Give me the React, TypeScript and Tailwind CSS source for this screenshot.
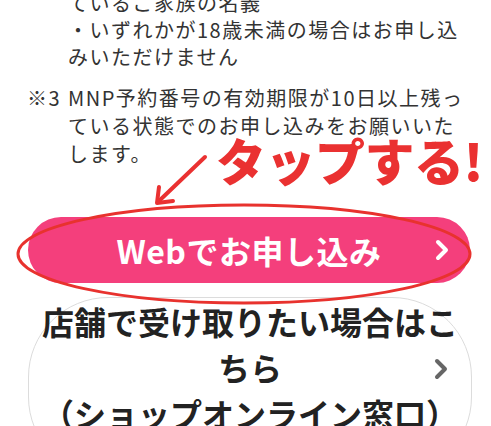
import React from "react";

function Chevron({ color }: { color: string }) {
  return (
    <svg className="w-[16px] h-[22px]" viewBox="0 0 16 22" fill="none">
      <polyline
        points="4,3 12,11 4,19"
        stroke={color}
        strokeWidth="4"
        strokeLinecap="round"
        strokeLinejoin="round"
      />
    </svg>
  );
}

export default function App() {
  return (
    <div
      className="relative w-[491px] h-[426px] overflow-hidden bg-white text-[#333]"
      style={{ fontFamily: '"Noto Sans CJK JP", "Noto Sans", sans-serif' }}
    >
      {/* Notes */}
      <div className="-mt-[11px] pl-[68px] text-[20px] tracking-[1.5px] leading-[27px] whitespace-nowrap">
        <p>ているご家族の名義</p>
        <p>・いずれかが18歳未満の場合はお申し込</p>
        <p>みいただけません</p>
      </div>
      <div className="mt-[14px] flex pl-[27px] text-[20px] tracking-[1.5px] leading-[28px] whitespace-nowrap">
        <span className="w-[41px] shrink-0">※3</span>
        <div>
          <p>MNP予約番号の有効期限が10日以上残っ</p>
          <p>ている状態でのお申し込みをお願いいた</p>
          <p>します。</p>
        </div>
      </div>

      {/* Buttons */}
      <div className="mt-[49px] flex flex-col gap-[14px] px-[28px]">
        <div className="relative h-[66px] w-[442px] rounded-full bg-[#f43f7c] flex items-center justify-center">
          <span className="text-white text-[32px] font-bold leading-none tracking-[0.5px]">
            Webでお申し込み
          </span>
          <div className="absolute right-[20px] top-1/2 -translate-y-1/2">
            <Chevron color="#ffffff" />
          </div>
        </div>
        <div className="relative w-[444px] rounded-[80px] border-[1.5px] border-[#dcdcdc] pb-[40px] text-center text-[32px] font-bold leading-[46px] text-[#222]">
          <p>店舗で受け取りたい場合はこ</p>
          <p>ちら</p>
          <p>（ショップオンライン窓口）</p>
          <div className="absolute right-[22px] top-[60px]">
            <Chevron color="#666666" />
          </div>
        </div>
      </div>

      {/* Annotation overlay */}
      <span className="absolute left-[216px] top-[126px] text-[50px] font-black leading-[66px] tracking-[-0.5px] text-[#ea3131] whitespace-nowrap">
        タップする!
      </span>
      <svg
        className="absolute left-0 top-0 pointer-events-none"
        width="491"
        height="426"
        viewBox="0 0 491 426"
        fill="none"
      >
        <line x1="205" y1="157" x2="160" y2="200" stroke="#ea3131" strokeWidth="4" strokeLinecap="round" />
        <polyline
          points="159,187 157,203 173,201"
          stroke="#ea3131"
          strokeWidth="4"
          strokeLinecap="round"
          strokeLinejoin="round"
        />
        <ellipse cx="244" cy="254" rx="226" ry="49" stroke="#e8322e" strokeWidth="3" />
      </svg>
    </div>
  );
}
